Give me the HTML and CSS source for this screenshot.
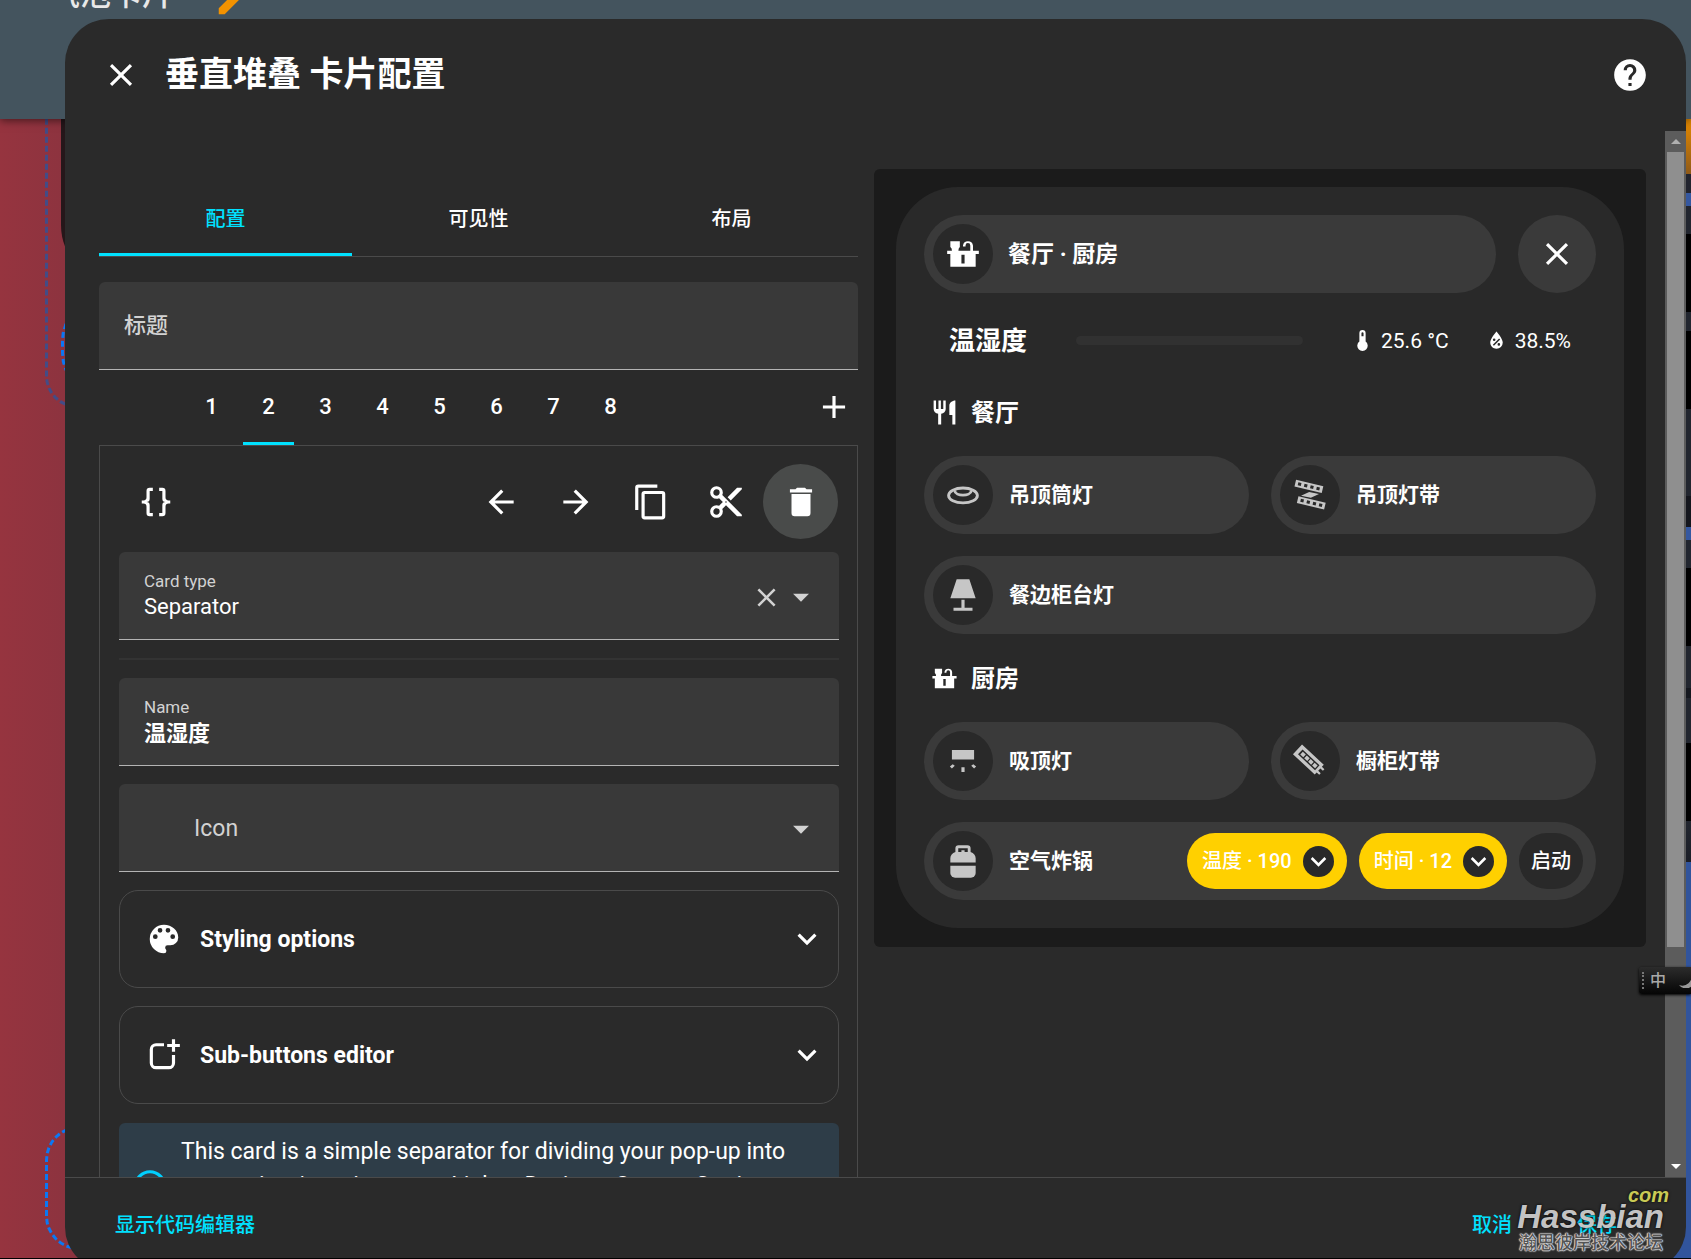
FILE: index.html
```html
<!DOCTYPE html>
<html lang="zh-CN">
<head>
<meta charset="utf-8">
<meta name="viewport" content="width=device-width, initial-scale=1">
<title>垂直堆叠 卡片配置</title>
<link rel="stylesheet" href="styles.css">
</head>
<body>
<svg class="sprite" aria-hidden="true">
  <symbol id="i-close" viewBox="0 0 24 24"><path d="M19,6.41L17.59,5L12,10.59L6.41,5L5,6.41L10.59,12L5,17.59L6.41,19L12,13.41L17.59,19L19,17.59L13.41,12L19,6.41Z"/></symbol>
  <symbol id="i-help" viewBox="0 0 24 24"><path d="M15.07,11.25L14.17,12.17C13.45,12.89 13,13.5 13,15H11V14.5C11,13.39 11.45,12.39 12.17,11.67L13.41,10.41C13.78,10.05 14,9.55 14,9C14,7.89 13.1,7 12,7A2,2 0 0,0 10,9H8A4,4 0 0,1 12,5A4,4 0 0,1 16,9C16,9.88 15.64,10.67 15.07,11.25M13,19H11V17H13M12,2A10,10 0 0,0 2,12A10,10 0 0,0 12,22A10,10 0 0,0 22,12C22,6.47 17.5,2 12,2Z"/></symbol>
  <symbol id="i-pencil" viewBox="0 0 24 24"><path d="M20.71,7.04C21.1,6.65 21.1,6 20.71,5.63L18.37,3.29C18,2.9 17.35,2.9 16.96,3.29L15.12,5.12L18.87,8.87M3,17.25V21H6.75L17.81,9.93L14.06,6.18L3,17.25Z"/></symbol>
  <symbol id="i-plus" viewBox="0 0 24 24"><path d="M19,13H13V19H11V13H5V11H11V5H13V11H19V13Z"/></symbol>
  <symbol id="i-braces" viewBox="0 0 24 24"><path d="M8,3A2,2 0 0,0 6,5V9A2,2 0 0,1 4,11H3V13H4A2,2 0 0,1 6,15V19A2,2 0 0,0 8,21H10V19H8V14A2,2 0 0,0 6,12A2,2 0 0,0 8,10V5H10V3M16,3A2,2 0 0,1 18,5V9A2,2 0 0,0 20,11H21V13H20A2,2 0 0,0 18,15V19A2,2 0 0,1 16,21H14V19H16V14A2,2 0 0,1 18,12A2,2 0 0,1 16,10V5H14V3H16Z"/></symbol>
  <symbol id="i-left" viewBox="0 0 24 24"><path d="M20,11V13H8L13.5,18.5L12.08,19.92L4.16,12L12.08,4.08L13.5,5.5L8,11H20Z"/></symbol>
  <symbol id="i-right" viewBox="0 0 24 24"><path d="M4,11V13H16L10.5,18.5L11.92,19.92L19.84,12L11.92,4.08L10.5,5.5L16,11H4Z"/></symbol>
  <symbol id="i-copy" viewBox="0 0 24 24"><path d="M19,21H8V7H19M19,5H8A2,2 0 0,0 6,7V21A2,2 0 0,0 8,23H19A2,2 0 0,0 21,21V7A2,2 0 0,0 19,5M16,1H4A2,2 0 0,0 2,3V17H4V3H16V1Z"/></symbol>
  <symbol id="i-cut" viewBox="0 0 24 24"><path d="M19,3L13,9L15,11L22,4V3M12,12.5A0.5,0.5 0 0,1 11.5,12A0.5,0.5 0 0,1 12,11.5A0.5,0.5 0 0,1 12.5,12A0.5,0.5 0 0,1 12,12.5M6,20A2,2 0 0,1 4,18C4,16.89 4.9,16 6,16A2,2 0 0,1 8,18C8,19.11 7.1,20 6,20M6,8A2,2 0 0,1 4,6C4,4.89 4.9,4 6,4A2,2 0 0,1 8,6C8,7.11 7.1,8 6,8M9.64,7.64C9.87,7.14 10,6.59 10,6A4,4 0 0,0 6,2A4,4 0 0,0 2,6A4,4 0 0,0 6,10C6.59,10 7.14,9.87 7.64,9.64L10,12L7.64,14.36C7.14,14.13 6.59,14 6,14A4,4 0 0,0 2,18A4,4 0 0,0 6,22A4,4 0 0,0 10,18C10,17.41 9.87,16.86 9.64,16.36L12,14L19,21H22V20L9.64,7.64Z"/></symbol>
  <symbol id="i-delete" viewBox="0 0 24 24"><path d="M19,4H15.5L14.5,3H9.5L8.5,4H5V6H19M6,19A2,2 0 0,0 8,21H16A2,2 0 0,0 18,19V7H6V19Z"/></symbol>
  <symbol id="i-menu" viewBox="0 0 24 24"><path d="M7,10L12,15L17,10H7Z"/></symbol>
  <symbol id="i-palette" viewBox="0 0 24 24"><path d="M17.5,12A1.5,1.5 0 0,1 16,10.5A1.5,1.5 0 0,1 17.5,9A1.5,1.5 0 0,1 19,10.5A1.5,1.5 0 0,1 17.5,12M14.5,8A1.5,1.5 0 0,1 13,6.5A1.5,1.5 0 0,1 14.5,5A1.5,1.5 0 0,1 16,6.5A1.5,1.5 0 0,1 14.5,8M9.5,8A1.5,1.5 0 0,1 8,6.5A1.5,1.5 0 0,1 9.5,5A1.5,1.5 0 0,1 11,6.5A1.5,1.5 0 0,1 9.5,8M6.5,12A1.5,1.5 0 0,1 5,10.5A1.5,1.5 0 0,1 6.5,9A1.5,1.5 0 0,1 8,10.5A1.5,1.5 0 0,1 6.5,12M12,3A9,9 0 0,0 3,12A9,9 0 0,0 12,21A1.5,1.5 0 0,0 13.5,19.5C13.5,19.11 13.35,18.76 13.11,18.5C12.88,18.23 12.73,17.88 12.73,17.5A1.5,1.5 0 0,1 14.23,16H16A5,5 0 0,0 21,11C21,6.58 16.97,3 12,3Z"/></symbol>
  <symbol id="i-chevron" viewBox="0 0 24 24"><path d="M7.41,8.58L12,13.17L16.59,8.58L18,10L12,16L6,10L7.41,8.58Z"/></symbol>
  <symbol id="i-shape-plus" viewBox="0 0 24 24"><path fill="none" stroke="currentColor" stroke-width="2" d="M12 5.5H7A3 3 0 0 0 4 8.500V17A3 3 0 0 0 7 20H15A3 3 0 0 0 18 17V12"/><path d="M17 2H19V5H22V7H19V10H17V7H14V5H17Z"/></symbol>
  <symbol id="i-info" viewBox="0 0 24 24"><path d="M11,9H13V7H11M12,20C7.59,20 4,16.41 4,12C4,7.59 7.59,4 12,4C16.41,4 20,7.59 20,12C20,16.41 16.41,20 12,20M12,2A10,10 0 0,0 2,12A10,10 0 0,0 12,22A10,10 0 0,0 22,12A10,10 0 0,0 12,2M11,17H13V11H11V17Z"/></symbol>
  <symbol id="i-counter" viewBox="0 0 24 24"><path fill-rule="evenodd" d="M2 10H5L4.800 8.500 4 7.500V4H10V7.500L9.300 8.500 9.100 10H16.600V6.600A1.500 1.500 0 0 0 13.600 6.600V7.200H12V6.600A3.200 3.200 0 0 1 18.300 6.600V10H22V12H20V20H4V12H2ZM11 12.500V18H13V12.500Z"/></symbol>
  <symbol id="i-thermo" viewBox="0 0 24 24"><path d="M15 13V5A3 3 0 0 0 9 5V13A5 5 0 1 0 15 13M12 4A1 1 0 0 1 13 5V8H11V5A1 1 0 0 1 12 4Z"/></symbol>
  <symbol id="i-humid" viewBox="0 0 24 24"><path d="M12,3.25C12,3.25 6,10 6,14C6,17.32 8.69,20 12,20A6,6 0 0,0 18,14C18,10 12,3.25 12,3.25M14.47,9.97L15.53,11.03L9.53,17.03L8.47,15.97M9.75,10A1.25,1.25 0 0,1 11,11.25A1.25,1.25 0 0,1 9.75,12.5A1.25,1.25 0 0,1 8.5,11.25A1.25,1.25 0 0,1 9.75,10M14.25,14.5A1.25,1.25 0 0,1 15.5,15.75A1.25,1.25 0 0,1 14.25,17A1.25,1.25 0 0,1 13,15.75A1.25,1.25 0 0,1 14.25,14.5Z"/></symbol>
  <symbol id="i-fork" viewBox="0 0 24 24"><path d="M11,9H9V2H7V9H5V2H3V9C3,11.12 4.66,12.84 6.75,12.97V22H9.25V12.97C11.34,12.84 13,11.12 13,9V2H11V9M16,6V14H18.5V22H21V2C18.24,2 16,4.24 16,6Z"/></symbol>
  <symbol id="i-downlight" viewBox="0 0 24 24"><g fill="none" stroke="currentColor" stroke-width="1.800"><ellipse cx="12" cy="12.300" rx="9.100" ry="4.700"/><path d="M6.700 9.200C7.200 13 16.800 13 17.300 9.200"/></g></symbol>
  <symbol id="i-strips" viewBox="0 0 24 24"><g transform="rotate(13.500 12 12)" fill-rule="evenodd"><path d="M1.200 4.700H18.900V9H1.200ZM3 5.900V7.800H5V5.900ZM7 5.900V7.800H9V5.900ZM11 5.900V7.800H13V5.900ZM15 5.900V7.800H17V5.900Z"/><path d="M5.100 14.500H22.800V18.800H5.100ZM7 15.700V17.600H9V15.700ZM11 15.700V17.600H13V15.700ZM15 15.700V17.600H17V15.700ZM19 15.700V17.600H21V15.700Z"/></g><path d="M6.300 12.400L11.500 10.100 17.700 11.400 12.500 13.700Z"/></symbol>
  <symbol id="i-lamp" viewBox="0 0 24 24"><path d="M8,2H16L20,14H4L8,2M11,15H13V20H18V22H6V20H11V15Z"/></symbol>
  <symbol id="i-ceiling" viewBox="0 0 24 24"><path d="M5 5H19V11H5ZM11 16H13V19H11ZM3.700 15.500L5.500 14 6.800 15 5 16.800ZM20.300 15.500L18.500 14 17.200 15 19 16.800Z"/></symbol>
  <symbol id="i-strip" viewBox="0 0 24 24"><g transform="rotate(43 12 12)"><path fill-rule="evenodd" d="M1.200 7.800H20V9.600H22.200V11H20V13H22.200V14.400H20V16.200H1.200ZM3.600 9.900V14.100H18.300V9.900Z"/><path d="M4.700 10.800H7.300V13.200H4.700ZM8.100 10.800H10.700V13.200H8.100ZM11.500 10.800H14.100V13.200H11.500ZM14.900 10.800H17.500V13.200H14.900Z"/></g></symbol>
  <symbol id="i-fryer" viewBox="0 0 24 24"><path fill-rule="evenodd" d="M7.200 6.300V4A2 2 0 0 1 9.200 2H14.800A2 2 0 0 1 16.800 4V6.300C18.800 6.800 20 8.500 20 10.200V13H4V10.200C4 8.500 5.200 6.800 7.200 6.300ZM9 6.300H11V5.200H13V6.300H15V4H9Z"/><path d="M4 15H20V19.500A3 3 0 0 1 17 22.500H7A3 3 0 0 1 4 19.500Z"/></symbol>
</svg>

<header class="appbar">
  <span class="appbar-title">气泡卡片</span>
  <svg class="icon appbar-edit"><use href="#i-pencil"/></svg>
</header>
<div class="canvas" aria-hidden="true">
  <div class="shade"></div>
  <div class="dash dash-top"></div>
  <div class="dash dash-mid"></div>
  <div class="dash dash-bottom"></div>
  <div class="side-strip"></div>
</div>

<section class="dialog" role="dialog" aria-labelledby="dlg-title">
  <header class="dialog-head">
    <button class="icon-btn" aria-label="关闭"><svg class="icon"><use href="#i-close"/></svg></button>
    <h1 id="dlg-title">垂直堆叠 卡片配置</h1>
    <button class="icon-btn" aria-label="帮助"><svg class="icon"><use href="#i-help"/></svg></button>
  </header>

  <div class="dialog-body">
    <main class="content">
      <div class="editor">
        <nav class="tabs" role="tablist">
          <button class="tab active" role="tab" aria-selected="true">配置</button>
          <button class="tab" role="tab">可见性</button>
          <button class="tab" role="tab">布局</button>
        </nav>
        <label class="field resting">
          <span class="field-label">标题</span>
          <input type="text">
        </label>
        <div class="numbers">
          <div class="number-tabs" role="tablist">
            <button class="num" role="tab">1</button>
            <button class="num active" role="tab" aria-selected="true">2</button>
            <button class="num" role="tab">3</button>
            <button class="num" role="tab">4</button>
            <button class="num" role="tab">5</button>
            <button class="num" role="tab">6</button>
            <button class="num" role="tab">7</button>
            <button class="num" role="tab">8</button>
          </div>
          <button class="icon-btn" aria-label="添加卡片"><svg class="icon"><use href="#i-plus"/></svg></button>
        </div>
        <div class="panel">
          <div class="toolbar">
            <button class="tool first" aria-label="代码"><svg class="icon"><use href="#i-braces"/></svg></button>
            <button class="tool" aria-label="前移"><svg class="icon"><use href="#i-left"/></svg></button>
            <button class="tool" aria-label="后移"><svg class="icon"><use href="#i-right"/></svg></button>
            <button class="tool" aria-label="复制"><svg class="icon"><use href="#i-copy"/></svg></button>
            <button class="tool" aria-label="剪切"><svg class="icon"><use href="#i-cut"/></svg></button>
            <button class="tool focused" aria-label="删除"><svg class="icon"><use href="#i-delete"/></svg></button>
          </div>
          <div class="field with-actions">
            <div class="field-main">
              <label class="field-label" for="card-type">Card type</label>
              <select id="card-type"><option>Separator</option></select>
            </div>
            <button class="icon-btn" aria-label="清除"><svg class="icon icon-clear"><use href="#i-close"/></svg></button>
            <svg class="icon"><use href="#i-menu"/></svg>
          </div>
          <hr>
          <div class="field">
            <div class="field-main">
              <label class="field-label" for="name">Name</label>
              <input id="name" type="text" value="温湿度">
            </div>
          </div>
          <div class="field with-actions">
            <label class="resting resting-icon">
              <span class="field-label">Icon</span>
              <input type="text">
            </label>
            <svg class="icon"><use href="#i-menu"/></svg>
          </div>
          <button class="expander"><svg class="icon"><use href="#i-palette"/></svg><span>Styling options</span><svg class="icon"><use href="#i-chevron"/></svg></button>
          <button class="expander"><svg class="icon"><use href="#i-shape-plus"/></svg><span>Sub-buttons editor</span><svg class="icon"><use href="#i-chevron"/></svg></button>
          <div class="alert">
            <svg class="icon"><use href="#i-info"/></svg>
            <p>This card is a simple separator for dividing your pop-up into categories / sections. e.g. Lights, Devices, Covers, Settings, Automations...</p>
          </div>
        </div>
      </div>

      <div class="preview">
        <article class="popup">
          <div class="row">
            <div class="pill head"><span class="disc on"><svg class="icon"><use href="#i-counter"/></svg></span><span class="pill-name">餐厅 · 厨房</span></div>
            <button class="round" aria-label="关闭弹窗"><svg class="icon"><use href="#i-close"/></svg></button>
          </div>
          <div class="climate">
            <h2>温湿度</h2>
            <span class="line"></span>
            <span class="reading"><svg class="icon icon-sm"><use href="#i-thermo"/></svg>25.6 °C</span>
            <span class="reading"><svg class="icon icon-sm"><use href="#i-humid"/></svg>38.5%</span>
          </div>
          <h3 class="sep"><svg class="icon"><use href="#i-fork"/></svg><span>餐厅</span></h3>
          <div class="row">
            <div class="pill"><span class="disc"><svg class="icon"><use href="#i-downlight"/></svg></span><span class="pill-name">吊顶筒灯</span></div>
            <div class="pill"><span class="disc"><svg class="icon"><use href="#i-strips"/></svg></span><span class="pill-name">吊顶灯带</span></div>
          </div>
          <div class="row">
            <div class="pill"><span class="disc"><svg class="icon"><use href="#i-lamp"/></svg></span><span class="pill-name">餐边柜台灯</span></div>
          </div>
          <h3 class="sep"><svg class="icon"><use href="#i-counter"/></svg><span>厨房</span></h3>
          <div class="row">
            <div class="pill"><span class="disc"><svg class="icon"><use href="#i-ceiling"/></svg></span><span class="pill-name">吸顶灯</span></div>
            <div class="pill"><span class="disc"><svg class="icon"><use href="#i-strip"/></svg></span><span class="pill-name">橱柜灯带</span></div>
          </div>
          <div class="row">
            <div class="pill">
              <span class="disc"><svg class="icon"><use href="#i-fryer"/></svg></span><span class="pill-name">空气炸锅</span>
              <div class="chips">
                <button class="chip"><span>温度 · 190</span><span class="chip-arrow"><svg class="icon"><use href="#i-chevron"/></svg></span></button>
                <button class="chip"><span>时间 · 12</span><span class="chip-arrow"><svg class="icon"><use href="#i-chevron"/></svg></span></button>
                <button class="chip dark"><span>启动</span></button>
              </div>
            </div>
          </div>
        </article>
      </div>
    </main>
    <div class="scrollbar" aria-hidden="true"><i class="up"></i><b class="thumb"></b><i class="down"></i></div>
  </div>

  <footer class="dialog-foot">
    <button class="text-btn">显示代码编辑器</button>
    <button class="text-btn">取消</button>
    <button class="text-btn">保存</button>
  </footer>
</section>

<div class="ime"><span class="grip"></span><span class="ime-lang">中</span><svg class="moon" viewBox="0 0 14 14"><path d="M12 0A9 9 0 0 1 0 11A9 9 0 0 0 14 11V0Z"/></svg></div>
<div class="watermark"><span class="wm-com">com</span><span class="wm-name">Hassbian</span><span class="wm-sub">瀚思彼岸技术论坛</span></div>
</body>
</html>
```
FILE: styles.css
```css
* { box-sizing: border-box; }

:root {
  --surface: #2a2a2a;
  --raised: #3a3a3a;
  --line: #4a4a4a;
  --accent: #00e1ff;
}

body {
  margin: 0;
  height: 100vh;
  overflow: hidden;
  position: relative;
  background: linear-gradient(90deg, #96343f, #8c333f 70px, #31549c 80%);
  color: #fff;
  font-family: Roboto, "Noto Sans CJK SC", sans-serif;
  font-size: 22px;
}

body::after {
  content: "";
  position: absolute;
  z-index: 4;
  inset: auto 0 0 0;
  height: 1px;
  background: #000;
}

button, input, select {
  font: inherit;
  color: inherit;
  background: none;
  border: 0;
  padding: 0;
  margin: 0;
  outline: 0;
}

h1, h2, h3, p { margin: 0; }

.sprite { position: absolute; width: 0; height: 0; }
.icon { width: 38px; height: 38px; fill: currentColor; flex: none; display: block; }
.icon-btn { display: grid; place-items: center; }

/* page behind the dialog */
.appbar {
  height: 119px;
  background: #44545e;
  box-shadow: 0 2px 8px rgba(0, 0, 0, .5);
  position: relative;
  z-index: 1;
}
.appbar-title { position: absolute; left: 49px; top: -24px; font-size: 31px; line-height: 38px; font-weight: 500; color: #e8e8e8; }
.appbar-edit { position: absolute; left: 214px; top: -19px; color: #f39200; }

.canvas > div { position: absolute; }
.shade { left: 61px; top: 20px; width: 200px; height: 265px; border-radius: 60px; background: #25171a; }
.dash { border: 3px dashed #0a78f5; }
.dash-top { left: 45px; top: 60px; width: 200px; height: 348px; border-color: #434c86; border-radius: 32px; }
.dash-mid { left: 61px; top: 297px; width: 200px; height: 100px; border-radius: 44px; }
.dash-bottom { left: 45px; top: 1126px; width: 200px; height: 124px; border-radius: 34px; }
.side-strip {
  right: 0; top: 119px; bottom: 0; width: 12px;
  background: linear-gradient(#e68a00 0, #8f5a18 55px, #22242e 55px, #22242e 74px, #3558a0 74px, #3558a0 87px,
    #22262f 87px, #22262f 115px, #000 115px, #000 193px, #22262f 193px, #22262f 212px, #000 212px, #000 290px,
    #22262f 290px, #22262f 377px, #14161d 377px, #14161d 408px, #3558a0 408px, #3558a0 421px, #22262f 421px,
    #22262f 449px, #000 449px, #000 527px, #22262f 527px, #22262f 569px, #15181f 569px, #15181f 579px,
    #22262f 579px, #22262f 624px, #000 624px, #000 702px, #22262f 702px, #1b1e27 743px, #31549c 743px);
}

/* dialog */
.dialog {
  position: absolute;
  inset: 19px 5px -12px 65px;
  z-index: 2;
  display: flex;
  flex-direction: column;
  background: var(--surface);
  border-radius: 44px;
  overflow: hidden;
}
.dialog-head { display: flex; align-items: center; gap: 25px; height: 112px; padding: 0 37px; flex: none; }
.dialog-head h1 { flex: 1; font-size: 34px; line-height: 40px; font-weight: 700; padding-bottom: 2px; }

.dialog-body { flex: 1; min-height: 0; display: flex; overflow: hidden; }
.content {
  flex: 1;
  min-width: 0;
  display: grid;
  grid-template-columns: 759fr 772fr;
  gap: 16px;
  align-items: start;
  padding: 38px 19px 0 34px;
}
.scrollbar { width: 21px; flex: none; display: flex; flex-direction: column; align-items: center; background: #5c5c5c; }
.scrollbar i { height: 21px; display: grid; place-items: center; }
.scrollbar i::before { content: ""; border: 5px solid transparent; border-top-width: 0; border-bottom-color: #b0b0b0; }
.scrollbar .down { margin-top: auto; }
.scrollbar .down::before { border-width: 5px 5px 0; border-color: #fff transparent transparent; }
.thumb { width: 17px; height: 76%; background: #8f8f8f; }

/* editor column */
.editor { padding-top: 12px; min-width: 0; }
.tabs { display: grid; grid-template-columns: repeat(3, 1fr); height: 76px; border-bottom: 1px solid var(--line); margin-bottom: 25px; }
.tab { font-size: 20px; font-weight: 500; border-bottom: 3px solid transparent; padding-top: 1px; }
.tab.active { color: var(--accent); border-color: var(--accent); }

.field {
  display: flex;
  align-items: center;
  height: 88px;
  padding: 0 25px;
  background: #393939;
  border-bottom: 1px solid #b4b4b4;
  border-radius: 6px 6px 0 0;
}
.field-main { flex: 1; min-width: 0; display: flex; flex-direction: column; padding-bottom: 1px; }
.field-label { font-size: 17px; line-height: 24px; color: #d2d2d2; }
.field input, .field select { width: 100%; height: 28px; line-height: 28px; appearance: none; }
.field-main input { font-weight: 700; line-height: 24px; padding-bottom: 4px; }
.field.with-actions { padding-right: 19px; color: #d2d2d2; }
.field select { color: #fff; }
.field > .icon, .field > .icon-btn { margin-top: 3px; }
.field .icon-btn { width: 31px; }
.icon-clear { width: 31px; height: 31px; }
.resting { display: grid; align-items: center; }
.resting > * { grid-area: 1 / 1; }
.resting .field-label { font-size: 22px; font-weight: 500; }
.resting-icon { flex: 1; padding-left: 50px; padding-top: 2px; }
.resting-icon .field-label { font-size: 23px; font-weight: 400; }

.numbers { display: flex; justify-content: space-between; height: 75px; padding: 0 5px 2px 84px; }
.number-tabs { display: flex; margin-bottom: -2px; }
.num { width: 57px; padding: 0 3px; font-weight: 500; display: grid; grid-template-rows: 1fr 3px; align-items: center; }
.num::after { content: ""; height: 3px; }
.num.active::after { background: var(--accent); }

.panel { border: 1px solid var(--line); padding: 18px 18px 18px 19px; display: flex; flex-direction: column; gap: 18px; }
.toolbar { display: flex; margin: 0 1px -5px -1px; }
.tool { width: 75px; height: 75px; border-radius: 50%; display: grid; place-items: center; }
.tool.first { margin-right: auto; }
.tool.focused { background: #494b4a; }
hr { width: 100%; height: 2px; margin: 0; border: 0; background: #333; }

.expander {
  display: flex;
  align-items: center;
  gap: 17px;
  height: 98px;
  padding: 0 12px 0 25px;
  border: 1px solid var(--line);
  border-radius: 19px;
  font-size: 23px;
  font-weight: 700;
  text-align: left;
}
.expander span { flex: 1; }

.alert { display: flex; align-items: center; gap: 12px; margin-top: 1px; padding: 12px 12px 18px; border-radius: 6px; background: #2e3d48; }
.alert .icon { color: #00d0ff; }
.alert p { font-size: 23px; line-height: 34px; }

/* preview column */
.preview { padding: 18px 22px 19px; border-radius: 6px; background: #1b1b1b; min-width: 0; }
.popup { display: flex; flex-direction: column; gap: 22px; padding: 28px; border-radius: 62px; background: #292929; }
.row { display: flex; gap: 22px; }
.pill { flex: 1; min-width: 0; display: flex; align-items: center; height: 78px; padding: 0 13px 0 9px; border-radius: 39px; background: var(--raised); }
.pill-name { margin-left: 16px; padding-bottom: 4px; font-size: 21px; font-weight: 700; }
.head .pill-name { font-size: 23px; margin-left: 15px; }
.disc { width: 60px; height: 60px; border-radius: 50%; display: grid; place-items: center; background: #292929; color: #c6c6c6; }
.disc.on { color: #fff; }
.round { width: 78px; height: 78px; border-radius: 50%; display: grid; place-items: center; background: var(--raised); }

.climate { display: flex; align-items: center; height: 53px; padding: 0 25px 2px; }
.climate h2 { font-size: 26px; font-weight: 700; padding-bottom: 4px; }
.line { flex: 1; height: 9px; margin: 0 10px 0 49px; border-radius: 5px; background: #313131; }
.reading { display: flex; align-items: center; gap: 6px; margin-left: 37px; font-size: 21px; }
.reading + .reading { margin-left: 35px; }
.icon-sm { width: 25px; height: 25px; }

.sep { display: flex; align-items: center; gap: 12px; height: 44px; padding-left: 6px; font-size: 24px; font-weight: 700; }
.sep span { padding-bottom: 4px; }
.sep .icon { width: 29px; height: 29px; }

.chips { margin-left: auto; display: flex; gap: 12px; }
.chip { display: flex; align-items: center; gap: 11px; height: 56px; padding: 0 13px 0 15px; border-radius: 28px; background: #ffd000; font-size: 20px; font-weight: 500; }
.chip > span:first-child { padding-bottom: 3px; }
.chip-arrow { width: 31px; height: 31px; border-radius: 50%; display: grid; place-items: center; background: #292929; }
.chip-arrow .icon { width: 31px; height: 31px; }
.chip.dark { padding: 0 12px; background: #292929; }

.dialog-foot { flex: none; height: 94px; border-top: 1px solid var(--line); display: flex; align-items: center; gap: 65px; padding: 0 69px 2px 50px; }
.text-btn { color: var(--accent); font-size: 20px; font-weight: 500; }
.text-btn:first-child { margin-right: auto; }

/* overlays */
.ime {
  position: absolute;
  right: 0;
  top: 967px;
  z-index: 3;
  display: flex;
  align-items: center;
  width: 52px;
  height: 27px;
  padding-left: 3px;
  overflow: hidden;
  border-radius: 3px 0 0 3px;
  background: linear-gradient(#2c2c2c, #050505);
  box-shadow: 0 1px 3px #000;
}
.grip { height: 17px; border-left: 2px dotted #777; }
.ime-lang { margin-left: 6px; padding-bottom: 3px; font-size: 16px; font-weight: 500; color: #a8a8a8; }
.moon { flex: none; width: 14px; height: 14px; margin-left: 13px; fill: #999; }

.watermark {
  position: absolute;
  right: 22px;
  bottom: 5px;
  z-index: 3;
  display: grid;
  justify-items: end;
  font-family: "Liberation Sans", "Noto Sans CJK SC", sans-serif;
  font-weight: 700;
  font-style: italic;
  text-shadow: 0 0 3px #000;
}
.wm-com { font-size: 20px; line-height: 14px; color: #c9ca55; }
.wm-name { margin-right: 5px; font-size: 33px; line-height: 30px; color: rgba(215, 215, 215, .92); }
.wm-sub { margin-right: 6px; font-size: 18px; line-height: 22px; font-style: normal; font-weight: 500; color: #555; text-shadow: 0 0 1px #eee, 0 0 1px #eee, 0 0 1px #eee, 0 0 2px #ddd, 0 0 2px #ddd; }
```
